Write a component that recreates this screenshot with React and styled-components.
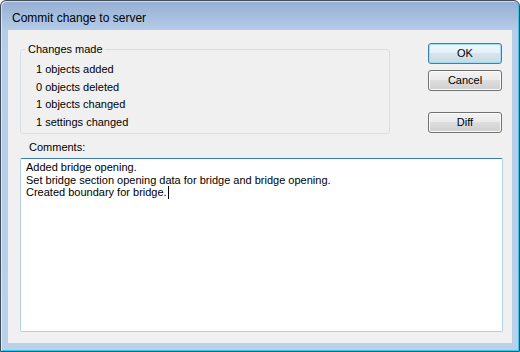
import React from "react";
import styled, { createGlobalStyle } from "styled-components";

const Global = createGlobalStyle`
  html, body { margin: 0; padding: 0; background: #ffffff; }
  body { font-family: "Liberation Sans", Arial, sans-serif; }
  * { box-sizing: border-box; }
`;

const Window = styled.div`
  width: 520px;
  height: 352px;
  display: flex;
  flex-direction: column;
  border: 1px solid #434d5a;
  border-radius: 6px 6px 0 0;
  background: linear-gradient(to bottom, #95aed2 0px, #a9c1e0 18px, #b5cde8 30px, #b9d1eb 100%);
  box-shadow: inset 1px 1px 0 rgba(255, 255, 255, 0.55), inset -1px -1px 0 #3cc6e6;
  overflow: hidden;
`;

const TitleBar = styled.div`
  height: 29px;
  flex: none;
  display: flex;
  align-items: flex-start;
  padding: 10px 0 0 11px;
`;

const Title = styled.span`
  font-family: "Liberation Sans", Arial, sans-serif;
  font-size: 12px;
  line-height: 14px;
  color: #000000;
`;

const Client = styled.div`
  flex: 1;
  margin: 0 7px 8px 7px;
  background: #f0f0f0;
  display: flex;
  flex-direction: column;
  padding: 0 9px 11px 12px;
  font-family: "Liberation Sans", Arial, sans-serif;
  font-size: 11px;
  color: #000000;
`;

const TopRow = styled.div`
  display: flex;
  justify-content: space-between;
  align-items: flex-start;
`;

const LeftCol = styled.div`
  display: flex;
  flex-direction: column;
`;

const GroupBox = styled.div`
  position: relative;
  margin-top: 19px;
  width: 370px;
  height: 85px;
  border: 1px solid #d5dfe5;
  border-radius: 3px;
  padding: 11px 0 0 15px;
`;

const Legend = styled.span`
  position: absolute;
  left: 5px;
  top: -8px;
  padding: 0 2px;
  line-height: 14px;
  background: #f0f0f0;
`;

const Item = styled.div`
  line-height: 17.7px;
  height: 17.7px;
  white-space: nowrap;
`;

const Label = styled.div`
  margin: 7px 0 0 9px;
  line-height: 13px;
  height: 13px;
`;

const ButtonCol = styled.div`
  display: flex;
  flex-direction: column;
  margin-top: 13px;
  margin-right: 1px;
`;

const Button = styled.button`
  width: 74px;
  height: 21px;
  margin-top: ${(p) => p.$gap || 0}px;
  padding: 0;
  font-family: "Liberation Sans", Arial, sans-serif;
  font-size: 11px;
  color: #000000;
  border-radius: 3px;
  border: 1px solid ${(p) => (p.$default ? "#3c7fb1" : "#707070")};
  background: ${(p) =>
    p.$default
      ? "linear-gradient(to bottom, #eef7fc 0%, #e4f1f9 45%, #d6e4ec 50%, #cbd9e1 100%)"
      : "linear-gradient(to bottom, #f2f2f2 0%, #ebebeb 45%, #dddddd 50%, #cfcfcf 100%)"};
  box-shadow: inset 0 0 0 1px ${(p) => (p.$default ? "#9ddcf7" : "#fbfbfb")};
  line-height: 19px;
`;

const EditBox = styled.div`
  margin-top: 4px;
  height: 174px;
  width: 483px;
  background: #ffffff;
  border: 1px solid #b5cfe5;
  border-top-color: #3d7bad;
  border-radius: 2px;
  padding: 2px 5px;
  line-height: 12.5px;
  white-space: pre;
`;

const Caret = styled.span`
  display: inline-block;
  width: 1px;
  height: 13px;
  background: #000000;
  vertical-align: top;
  margin-left: 1px;
`;

const items = ["1 objects added", "0 objects deleted", "1 objects changed", "1 settings changed"];

export default function App() {
  return (
    <>
      <Global />
      <Window>
        <TitleBar>
          <Title>Commit change to server</Title>
        </TitleBar>
        <Client>
          <TopRow>
            <LeftCol>
              <GroupBox>
                <Legend>Changes made</Legend>
                {items.map((t) => (
                  <Item key={t}>{t}</Item>
                ))}
              </GroupBox>
              <Label>Comments:</Label>
            </LeftCol>
            <ButtonCol>
              <Button $default>OK</Button>
              <Button $gap={6}>Cancel</Button>
              <Button $gap={21}>Diff</Button>
            </ButtonCol>
          </TopRow>
          <EditBox>
            <div>Added bridge opening.</div>
            <div>Set bridge section opening data for bridge and bridge opening.</div>
            <div>
              Created boundary for bridge.
              <Caret />
            </div>
          </EditBox>
        </Client>
      </Window>
    </>
  );
}
